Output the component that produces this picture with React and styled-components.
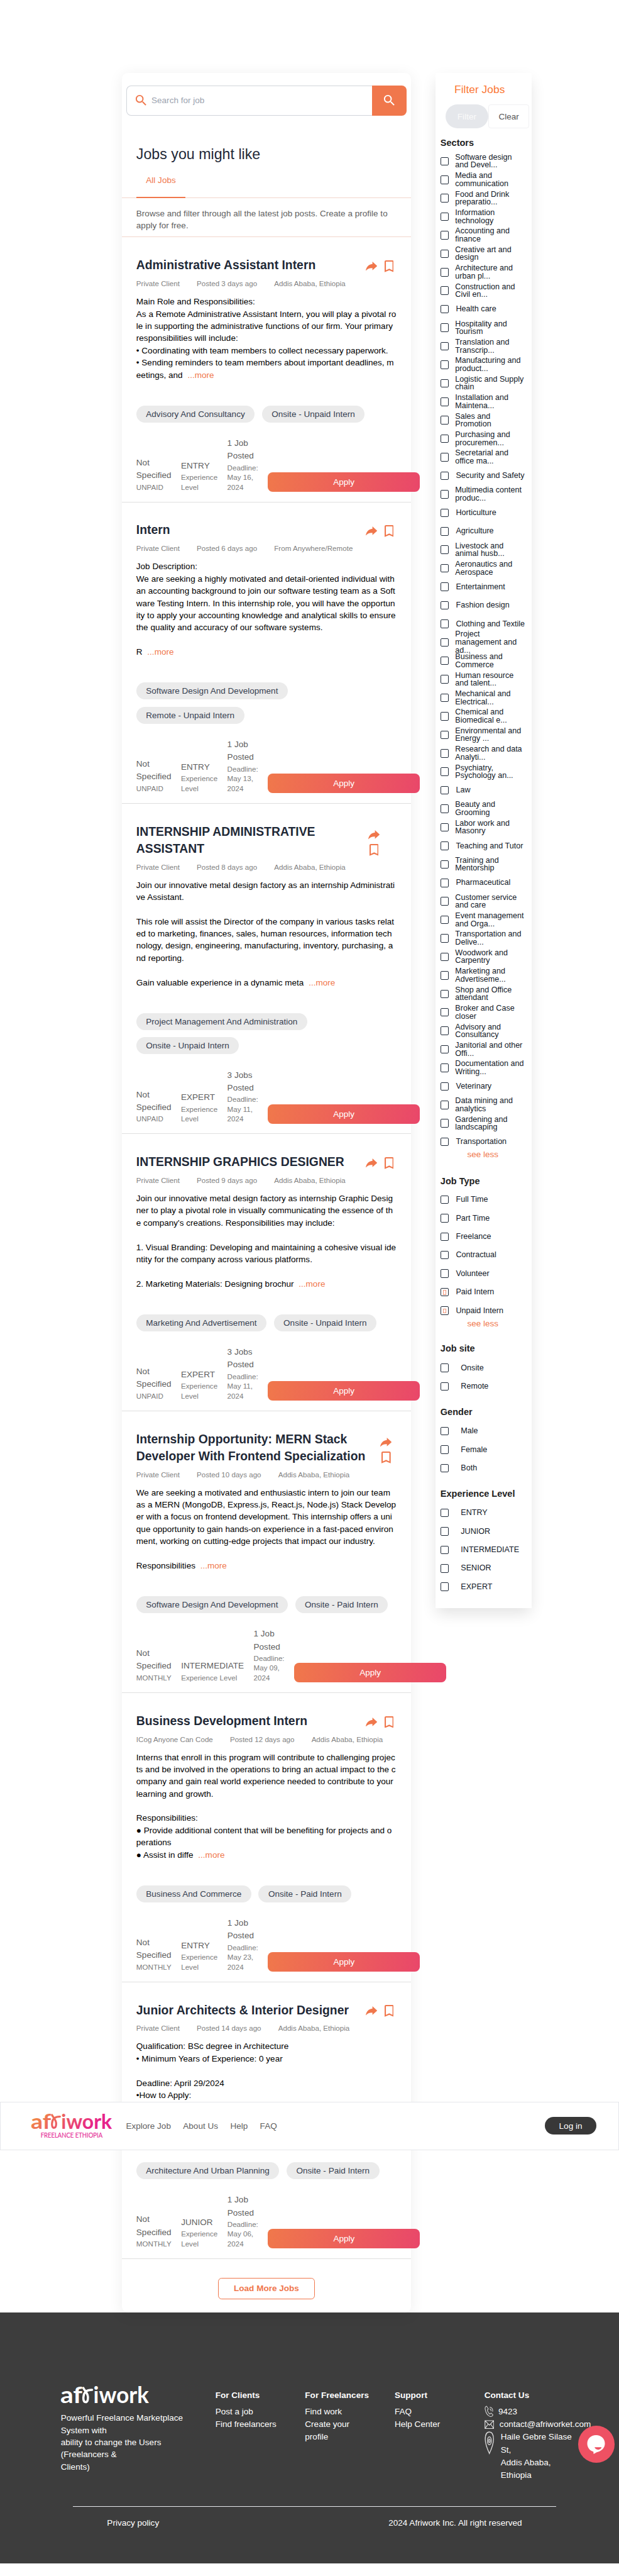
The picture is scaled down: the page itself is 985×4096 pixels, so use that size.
import React from "react";
import styled, { createGlobalStyle, css } from "styled-components";

const ORANGE = "#f0774c";
const INK = "#1f2937";

const GlobalStyle = createGlobalStyle`
  *, *::before, *::after { box-sizing: border-box; }
  body { margin: 0; background: #fff; overflow-x: hidden; }
  button, input { font-family: inherit; }
`;

const Page = styled.div`
  position: relative;
  zoom: 0.968;
  width: 100%;
  height: 4231px;
  overflow: hidden;
  background: #fff;
  font-family: "Liberation Sans", Arial, sans-serif;
  font-size: 14px;
  line-height: 20px;
  color: #000;
`;

const Content = styled.div`
  display: flex;
  align-items: flex-start;
  gap: 40px;
  height: 3799px;
  padding: 120px 0 0 200px;
`;

/* ---------- job feed ---------- */

const Feed = styled.main`
  width: 476px;
  height: 3679px;
  flex: none;
  padding-top: 20px;
  border-radius: 10px;
  background: #fff;
  box-shadow: 0 4px 24px rgba(0, 0, 0, 0.07);
`;

const SearchBar = styled.form`
  display: flex;
  height: 50px;
  margin: 0 8px;
`;

const SearchField = styled.div`
  display: flex;
  align-items: center;
  gap: 5px;
  flex: 1;
  padding-left: 11px;
  border: 1px solid #d1d5db;
  border-right: 0;
  border-radius: 8px 0 0 8px;
  color: #9ca3af;
`;

const SearchButton = styled.button`
  width: 56px;
  padding: 0;
  border: 0;
  border-radius: 0 8px 8px 0;
  background: ${ORANGE};
  line-height: 0;
`;

const FeedTitle = styled.h1`
  margin: 48px 24px 0;
  font-size: 24px;
  font-weight: 400;
  line-height: 32px;
  color: ${INK};
`;

const Tabs = styled.div`
  display: flex;
  height: 55px;
  padding: 0 24px;
  border-bottom: 1px solid #f1d6cc;
`;

const Tab = styled.div`
  width: 81px;
  height: 55px;
  padding: 16px 16px 0;
  border-bottom: 3px solid ${ORANGE};
  color: ${ORANGE};
`;

const Intro = styled.p`
  height: 65px;
  margin: 0;
  padding: 16px 24px 0;
  border-bottom: 1px solid #f1d6cc;
  color: #616161;
`;

const Card = styled.article`
  padding: 32px 24px 16px;
  border-bottom: 1px solid #dfdfdf;
`;

const CardHead = styled.div`
  display: flex;
  justify-content: space-between;
  align-items: flex-start;
`;

const CardTitle = styled.h2`
  margin: 0;
  font-size: 20px;
  line-height: 28px;
  color: ${INK};
  white-space: pre;
`;

const Actions = styled.div`
  display: flex;
  align-items: center;
  gap: 11.5px;
  padding-top: 6px;
  margin-right: 5px;
  line-height: 0;
  ${(p) =>
    p.$inset &&
    css`
      flex-direction: column;
      gap: 8px;
      padding-top: 12px;
      margin-right: ${p.$inset}px;
      margin-bottom: -30px;
    `}
`;

const Meta = styled.div`
  display: flex;
  gap: 28px;
  margin-top: 8px;
  font-size: 12px;
  line-height: 16px;
  color: #828282;
`;

const Description = styled.p`
  min-height: ${(p) => p.$lines * 20}px;
  margin: 12px 0 0;
  white-space: pre;
`;

const More = styled.span`
  margin-left: 8px;
  color: ${ORANGE};
`;

const Chips = styled.div`
  display: flex;
  flex-wrap: wrap;
  gap: 12px;
  margin-top: 40px;
`;

const Chip = styled.span`
  height: 28px;
  padding: 0 16px;
  border-radius: 14px;
  background: #ebebeb;
  line-height: 28px;
  color: #374151;
  white-space: nowrap;
`;

const Stats = styled.div`
  display: flex;
  align-items: flex-end;
  gap: 16px;
  height: 90px;
  margin-top: 24px;
`;

const Stat = styled.div`
  width: min-content;
  flex: none;
  line-height: 21px;
  color: #5f5f5f;

  small {
    display: block;
    font-size: 12px;
    line-height: 16px;
    color: #7c7c7c;
  }
`;

const ApplyButton = styled.button`
  flex: none;
  width: 250px;
  height: 32px;
  border: 0;
  border-radius: 8px;
  background: linear-gradient(100deg, #f0784b, #e9476a);
  font-size: 14px;
  color: #fff;
`;

const LoadMore = styled.button`
  display: block;
  width: 160px;
  height: 35px;
  margin: 31px auto 0;
  border: 1px solid ${ORANGE};
  border-radius: 6px;
  background: #fff;
  font-size: 14px;
  font-weight: 700;
  color: ${ORANGE};
`;

/* ---------- filter panel ---------- */

const Panel = styled.aside`
  width: 158px;
  height: 2522px;
  flex: none;
  padding: 17px 0 0 8px;
  background: #fff;
  box-shadow: 0 10px 24px -2px rgba(0, 0, 0, 0.12);
`;

const PanelTitle = styled.div`
  margin-left: 23px;
  font-size: 18px;
  line-height: 20px;
  color: #fb7835;
`;

const FilterButtons = styled.div`
  display: flex;
  height: 39px;
  margin: 15px 0 0 8px;
`;

const FilterButton = styled.button`
  width: 71px;
  border: 0;
  border-radius: 20px;
  background: #e5e7eb;
  font-size: 14px;
  color: #fafafa;
`;

const ClearButton = styled.button`
  width: 67px;
  border: 1px solid #f1f1f3;
  border-radius: 4px;
  background: #fff;
  font-size: 14px;
  color: #555;
`;

const GroupTitle = styled.h3`
  margin: ${(p) => p.$top}px 0 ${(p) => p.$bottom}px;
  font-size: 15px;
  line-height: 22px;
  color: #222;
`;

const Option = styled.label`
  display: flex;
  align-items: center;
  gap: ${(p) => p.$gap}px;
  height: 30.4px;
  font-size: 13px;
  line-height: 13px;
  color: #111827;
  white-space: pre;
`;

const Box = styled.span`
  display: flex;
  align-items: center;
  justify-content: center;
  flex: none;
  width: 14px;
  height: 14px;
  border: 1px solid ${INK};
  border-radius: 2px;
`;

const Tick = styled.span`
  width: 6px;
  height: 8px;
  margin-top: 1px;
  border: 1px solid #f3967a;
`;

const SeeLess = styled.div`
  margin: -1px 0 0 44px;
  line-height: 14px;
  color: ${ORANGE};
`;

const Nav = styled.nav`
  position: absolute;
  top: 3452px;
  left: 0;
  right: 0;
  display: flex;
  align-items: center;
  height: 80px;
  padding: 0 36px 0 51px;
  border: 1px solid #e5e7eb;
  background: #fff;
  color: #616161;
`;

const NavLinks = styled.div`
  display: flex;
  flex: 1;
  gap: 20px;
  margin-left: 23px;
`;

const LoginButton = styled.button`
  width: 85px;
  height: 29px;
  border: 0;
  border-radius: 15px;
  background: #383838;
  font-size: 14px;
  color: #fff;
`;

/* ---------- footer ---------- */

const Footer = styled.footer`
  height: 412px;
  padding-top: 121px;
  background: #3d3d3d;
  color: #fff;
`;

const FooterTop = styled.div`
  display: flex;
  height: 197px;
  padding-left: 100px;
`;

const Brand = styled.div`
  width: 254px;
  line-height: 20px;
  white-space: pre;

  p { margin: -2px 0 0; }
`;

const FooterColumn = styled.div`
  width: ${(p) => p.$width || 147.4}px;
  padding-top: 5px;
  line-height: 21px;
  white-space: pre;

  h4 {
    margin: 0 0 5px;
    font-size: 14px;
  }
`;

const Contact = styled.div`
  display: flex;
  align-items: flex-start;
  gap: ${(p) => p.$gap}px;

  svg { flex: none; margin-top: ${(p) => p.$drop || 0}px; }
`;

const FooterBottom = styled.div`
  display: flex;
  justify-content: space-between;
  width: 794px;
  margin-left: 120px;
  padding: 16px 56px 0;
  border-top: 1px solid #e5e7eb;
`;

const ChatButton = styled.button`
  position: absolute;
  top: 3985px;
  left: 950px;
  display: flex;
  align-items: center;
  justify-content: center;
  width: 60px;
  height: 60px;
  padding: 0;
  border: 0;
  border-radius: 50%;
  background: #ee5163;
`;

/* ---------- drawings ---------- */

const LogoSvg = styled.svg`
  display: block;
  flex: none;
  overflow: visible;
`;

const SearchIcon = ({ color }) => (
  <svg width="24" height="24" viewBox="0 0 24 24" fill={color}>
    <path d="M15.5 14h-.79l-.28-.27A6.471 6.471 0 0 0 16 9.5 6.5 6.5 0 1 0 9.5 16c1.61 0 3.09-.59 4.23-1.57l.27.28v.79l5 4.99L20.49 19l-4.99-5zm-6 0C7.01 14 5 11.99 5 9.5S7.01 5 9.5 5 14 7.01 14 9.5 11.99 14 9.5 14z" />
  </svg>
);

const ShareIcon = () => (
  <svg width="19" height="15" viewBox="0 0 19 15" fill={ORANGE}>
    <path d="M11 0 L18.9 7.2 L11 14.2 V10.6 C6 10.4 2.8 12 0 15 C.8 9.5 4 4.6 11 3.9 Z" />
  </svg>
);

const BookmarkIcon = () => (
  <svg width="15.2" height="19.4" viewBox="5 3 14 18" preserveAspectRatio="none" fill={ORANGE}>
    <path d="M17 3H7c-1.1 0-1.99.9-1.99 2L5 21l7-3 7 3V5c0-1.1-.9-2-2-2zm0 15l-5-2.18L7 18V5h10v13z" />
  </svg>
);

const Wordmark = ({ width, fill, tagline }) => (
  <LogoSvg width={width} height={(width * 40) / 131} viewBox="0 0 131 40">
    <defs>
      <linearGradient id="brand" gradientUnits="userSpaceOnUse" x1="30" y1="-10" x2="75" y2="42">
        <stop offset="0" stopColor="#f0834a" />
        <stop offset="1" stopColor="#e6238a" />
      </linearGradient>
    </defs>
    <g fill={fill} fontFamily="Lato, sans-serif" fontWeight="700" fontSize="34">
      <text x="-1" y="24.5" textLength="33" lengthAdjust="spacingAndGlyphs">af</text>
      <text x="48.5" y="24.5" textLength="83" lengthAdjust="spacingAndGlyphs">iwork</text>
    </g>
    <path
      d="M33.500 2 C35 5.500 39.800 9 40.300 15 C40.600 20.500 39.200 23 36.900 23 C34.300 23 33.200 20 33.600 15.500 C34 9 37 4.600 46.500 4.600"
      fill="none"
      stroke={fill}
      strokeWidth="3.300"
      strokeLinecap="round"
    />
    {tagline && (
      <text x="15" y="39.2" fontFamily="Lato, sans-serif" fontSize="11" textLength="101" lengthAdjust="spacingAndGlyphs" fill="#e6359a" stroke="#e6359a" strokeWidth=".2">
        FREELANCE ETHIOPIA
      </text>
    )}
  </LogoSvg>
);

const PhoneIcon = () => (
  <svg width="15" height="19" viewBox="0 0 15 19" fill="none" stroke="#d6d6d6" strokeWidth="1.1">
    <path d="M3.500 1 C1 1.500 .6 4 1.300 7 C2.300 12 5.500 16.500 9.500 18 C11.500 18.500 13.500 17 13.800 15.200 L10.800 12.300 L8.800 14 C6.500 12.500 5.200 10 4.700 7.200 L6.300 5.500 Z" />
    <path d="M8.500 5.500 C10.300 6 11 7.500 10.800 9 M8.500 2.500 C12.300 3 14 6 13.300 10" />
  </svg>
);

const MailIcon = () => (
  <svg width="16" height="15" viewBox="0 0 16 15" fill="none" stroke="#dedede" strokeWidth="1.2">
    <path d="M.8 1 H15.200 V14 H.8 Z M.8 1 L8 8.500 L15.200 1 M.8 14 L6 6.500 M15.200 14 L10 6.500" />
  </svg>
);

const PinIcon = () => (
  <svg width="16" height="38" viewBox="0 0 16 38" fill="none" stroke="#d6d6d6" strokeWidth="1.4">
    <path d="M8 1 C3.500 1 1.200 6 1.200 13 C1.200 21 5 30 8 36.500 C11 30 14.800 21 14.800 13 C14.800 6 12.500 1 8 1 Z" />
    <ellipse cx="8" cy="15.5" rx="3.2" ry="6.5" />
    <ellipse cx="8" cy="15.5" rx="1.2" ry="3" />
  </svg>
);

const ChatIcon = () => (
  <svg width="30" height="31" viewBox="0 0 30 31">
    <path d="M15 0 C23.300 0 29.500 6 29.500 13.700 C29.500 21.500 23.500 26.500 16 28.200 L11 31 L10.500 27 C4.500 25.500 .5 20.500 .5 13.700 C.5 6 6.700 0 15 0 Z" fill="#fff" />
    <path d="M12.500 20 H24 C23 25 14.500 25.500 12.500 20 Z" fill="#ee5163" />
  </svg>
);

/* ---------- data ---------- */

const jobs = [
  {
    title: "Administrative Assistant Intern",
    meta: ["Private Client", "Posted 3 days ago", "Addis Ababa, Ethiopia"],
    text: "Main Role and Responsibilities:\nAs a Remote Administrative Assistant Intern, you will play a pivotal ro\nle in supporting the administrative functions of our firm. Your primary\nresponsibilities will include:\n• Coordinating with team members to collect necessary paperwork.\n• Sending reminders to team members about important deadlines, m\neetings, and",
    chips: ["Advisory And Consultancy", "Onsite - Unpaid Intern"],
    pay: "UNPAID", level: "ENTRY", count: "1 Job", deadline: "May 16,",
  },
  {
    title: "Intern",
    meta: ["Private Client", "Posted 6 days ago", "From Anywhere/Remote"],
    text: "Job Description:\nWe are seeking a highly motivated and detail-oriented individual with\nan accounting background to join our software testing team as a Soft\nware Testing Intern. In this internship role, you will have the opportun\nity to apply your accounting knowledge and analytical skills to ensure\nthe quality and accuracy of our software systems.\n\nR",
    chips: ["Software Design And Development", "Remote - Unpaid Intern"],
    pay: "UNPAID", level: "ENTRY", count: "1 Job", deadline: "May 13,",
  },
  {
    title: "INTERNSHIP ADMINISTRATIVE\nASSISTANT",
    inset: 28,
    meta: ["Private Client", "Posted 8 days ago", "Addis Ababa, Ethiopia"],
    text: "Join our innovative metal design factory as an internship Administrati\nve Assistant.\n\nThis role will assist the Director of the company in various tasks relat\ned to marketing, finances, sales, human resources, information tech\nnology, design, engineering, manufacturing, inventory, purchasing, a\nnd reporting.\n\nGain valuable experience in a dynamic meta",
    chips: ["Project Management And Administration", "Onsite - Unpaid Intern"],
    pay: "UNPAID", level: "EXPERT", count: "3 Jobs", deadline: "May 11,",
  },
  {
    title: "INTERNSHIP GRAPHICS DESIGNER",
    meta: ["Private Client", "Posted 9 days ago", "Addis Ababa, Ethiopia"],
    text: "Join our innovative metal design factory as internship Graphic Desig\nner to play a pivotal role in visually communicating the essence of th\ne company's creations. Responsibilities may include:\n\n1. Visual Branding: Developing and maintaining a cohesive visual ide\nntity for the company across various platforms.\n\n2. Marketing Materials: Designing brochur",
    chips: ["Marketing And Advertisement", "Onsite - Unpaid Intern"],
    pay: "UNPAID", level: "EXPERT", count: "3 Jobs", deadline: "May 11,",
  },
  {
    title: "Internship Opportunity: MERN Stack\nDeveloper With Frontend Specialization",
    inset: 8,
    meta: ["Private Client", "Posted 10 days ago", "Addis Ababa, Ethiopia"],
    text: "We are seeking a motivated and enthusiastic intern to join our team\nas a MERN (MongoDB, Express.js, React.js, Node.js) Stack Develop\ner with a focus on frontend development. This internship offers a uni\nque opportunity to gain hands-on experience in a fast-paced environ\nment, working on cutting-edge projects that impact our industry.\n\nResponsibilities",
    chips: ["Software Design And Development", "Onsite - Paid Intern"],
    pay: "MONTHLY", level: "INTERMEDIATE", count: "1 Job", deadline: "May 09,",
  },
  {
    title: "Business Development Intern",
    meta: ["ICog Anyone Can Code", "Posted 12 days ago", "Addis Ababa, Ethiopia"],
    text: "Interns that enroll in this program will contribute to challenging projec\nts and be involved in the operations to bring an actual impact to the c\nompany and gain real world experience needed to contribute to your\nlearning and growth.\n\nResponsibilities:\n● Provide additional content that will be benefiting for projects and o\nperations\n● Assist in diffe",
    chips: ["Business And Commerce", "Onsite - Paid Intern"],
    pay: "MONTHLY", level: "ENTRY", count: "1 Job", deadline: "May 23,",
  },
  {
    title: "Junior Architects & Interior Designer",
    meta: ["Private Client", "Posted 14 days ago", "Addis Ababa, Ethiopia"],
    text: "Qualification: BSc degree in Architecture\n• Minimum Years of Experience: 0 year\n\nDeadline: April 29/2024\n•How to Apply:",
    lines: 8,
    chips: ["Architecture And Urban Planning", "Onsite - Paid Intern"],
    pay: "MONTHLY", level: "JUNIOR", count: "1 Job", deadline: "May 06,",
  },
];

const sectors = [
  "Software design\nand Devel...", "Media and\ncommunication", "Food and Drink\npreparatio...",
  "Information\ntechnology", "Accounting and\nfinance", "Creative art and\ndesign",
  "Architecture and\nurban pl...", "Construction and\nCivil en...", "Health care",
  "Hospitality and\nTourism", "Translation and\nTranscrip...", "Manufacturing and\nproduct...",
  "Logistic and Supply\nchain", "Installation and\nMaintena...", "Sales and\nPromotion",
  "Purchasing and\nprocuremen...", "Secretarial and\noffice ma...", "Security and Safety",
  "Multimedia content\nproduc...", "Horticulture", "Agriculture", "Livestock and\nanimal husb...",
  "Aeronautics and\nAerospace", "Entertainment", "Fashion design", "Clothing and Textile",
  "Project\nmanagement and\nad...", "Business and\nCommerce", "Human resource\nand talent...",
  "Mechanical and\nElectrical...", "Chemical and\nBiomedical e...", "Environmental and\nEnergy ...",
  "Research and data\nAnalyti...", "Psychiatry,\nPsychology an...", "Law", "Beauty and\nGrooming",
  "Labor work and\nMasonry", "Teaching and Tutor", "Training and\nMentorship", "Pharmaceutical",
  "Customer service\nand care", "Event management\nand Orga...", "Transportation and\nDelive...",
  "Woodwork and\nCarpentry", "Marketing and\nAdvertiseme...", "Shop and Office\nattendant",
  "Broker and Case\ncloser", "Advisory and\nConsultancy", "Janitorial and other\nOffi...",
  "Documentation and\nWriting...", "Veterinary", "Data mining and\nanalytics",
  "Gardening and\nlandscaping", "Transportation",
];

const jobTypes = ["Full Time", "Part Time", "Freelance", "Contractual", "Volunteer", "Paid Intern", "Unpaid Intern"];

/* ---------- composed parts ---------- */

function JobCard({ job }) {
  return (
    <Card>
      <CardHead>
        <CardTitle>{job.title}</CardTitle>
        <Actions $inset={job.inset}>
          <ShareIcon />
          <BookmarkIcon />
        </Actions>
      </CardHead>
      <Meta>{job.meta.map((m) => <span key={m}>{m}</span>)}</Meta>
      <Description $lines={job.lines || 0}>
        {job.text}
        {!job.lines && <More>...more</More>}
      </Description>
      <Chips>{job.chips.map((c) => <Chip key={c}>{c}</Chip>)}</Chips>
      <Stats>
        <Stat>Not Specified<small>{job.pay}</small></Stat>
        <Stat>{job.level}<small>Experience Level</small></Stat>
        <Stat>{job.count} Posted<small>Deadline: {job.deadline} 2024</small></Stat>
        <ApplyButton>Apply</ApplyButton>
      </Stats>
    </Card>
  );
}

function Options({ items, checked = [], gap = 11.5 }) {
  return items.map((label) => (
    <Option key={label} $gap={label.includes("\n") ? gap - 1.2 : gap}>
      <Box>{checked.includes(label) && <Tick />}</Box>
      <span>{label}</span>
    </Option>
  ));
}

function FilterPanel() {
  return (
    <Panel>
      <PanelTitle>Filter Jobs</PanelTitle>
      <FilterButtons>
        <FilterButton>Filter</FilterButton>
        <ClearButton>Clear</ClearButton>
      </FilterButtons>
      <GroupTitle $top={13} $bottom={3.6}>Sectors</GroupTitle>
      <Options items={sectors} />
      <SeeLess>see less</SeeLess>
      <GroupTitle $top={25.8} $bottom={3.6}>Job Type</GroupTitle>
      <Options items={jobTypes} checked={["Paid Intern", "Unpaid Intern"]} />
      <SeeLess>see less</SeeLess>
      <GroupTitle $top={24} $bottom={4.8}>Job site</GroupTitle>
      <Options items={["Onsite", "Remote"]} gap={19.6} />
      <GroupTitle $top={16.2} $bottom={4.8}>Gender</GroupTitle>
      <Options items={["Male", "Female", "Both"]} gap={19.6} />
      <GroupTitle $top={16.2} $bottom={4.8}>Experience Level</GroupTitle>
      <Options items={["ENTRY", "JUNIOR", "INTERMEDIATE", "SENIOR", "EXPERT"]} gap={19.6} />
    </Panel>
  );
}

export default function App() {
  return (
    <Page>
      <GlobalStyle />
      <Content>
        <Feed>
          <SearchBar>
            <SearchField>
              <SearchIcon color={ORANGE} />
              <span>Search for job</span>
            </SearchField>
            <SearchButton type="button"><SearchIcon color="#fff" /></SearchButton>
          </SearchBar>
          <FeedTitle>Jobs you might like</FeedTitle>
          <Tabs><Tab>All Jobs</Tab></Tabs>
          <Intro>Browse and filter through all the latest job posts. Create a profile to apply for free.</Intro>
          {jobs.map((job) => <JobCard key={job.title} job={job} />)}
          <LoadMore>Load More Jobs</LoadMore>
        </Feed>
        <FilterPanel />
      </Content>

      <Footer>
        <FooterTop>
          <Brand>
            <Wordmark width={144} fill="#fff" />
            <p>{"Powerful Freelance Marketplace\nSystem with\nability to change the Users\n(Freelancers &\nClients)"}</p>
          </Brand>
          <FooterColumn>
            <h4>For Clients</h4>
            <div>Post a job</div>
            <div>Find freelancers</div>
          </FooterColumn>
          <FooterColumn>
            <h4>For Freelancers</h4>
            <div>Find work</div>
            <div>{"Create your\nprofile"}</div>
          </FooterColumn>
          <FooterColumn>
            <h4>Support</h4>
            <div>FAQ</div>
            <div>Help Center</div>
          </FooterColumn>
          <FooterColumn $width={190}>
            <h4>Contact Us</h4>
            <Contact $gap={8} $drop={1}><PhoneIcon /><span>9423</span></Contact>
            <Contact $gap={9} $drop={3}><MailIcon /><span>contact@afriworket.com</span></Contact>
            <Contact $gap={11} $drop={1}><PinIcon /><span>{"Haile Gebre Silase\nSt,\nAddis Ababa,\nEthiopia"}</span></Contact>
          </FooterColumn>
        </FooterTop>
        <FooterBottom>
          <span>Privacy policy</span>
          <span>2024 Afriwork Inc. All right reserved</span>
        </FooterBottom>
      </Footer>

      <Nav>
        <Wordmark width={132} fill="url(#brand)" tagline />
        <NavLinks>
          <span>Explore Job</span>
          <span>About Us</span>
          <span>Help</span>
          <span>FAQ</span>
        </NavLinks>
        <LoginButton>Log in</LoginButton>
      </Nav>
      <ChatButton aria-label="Chat"><ChatIcon /></ChatButton>
    </Page>
  );
}
